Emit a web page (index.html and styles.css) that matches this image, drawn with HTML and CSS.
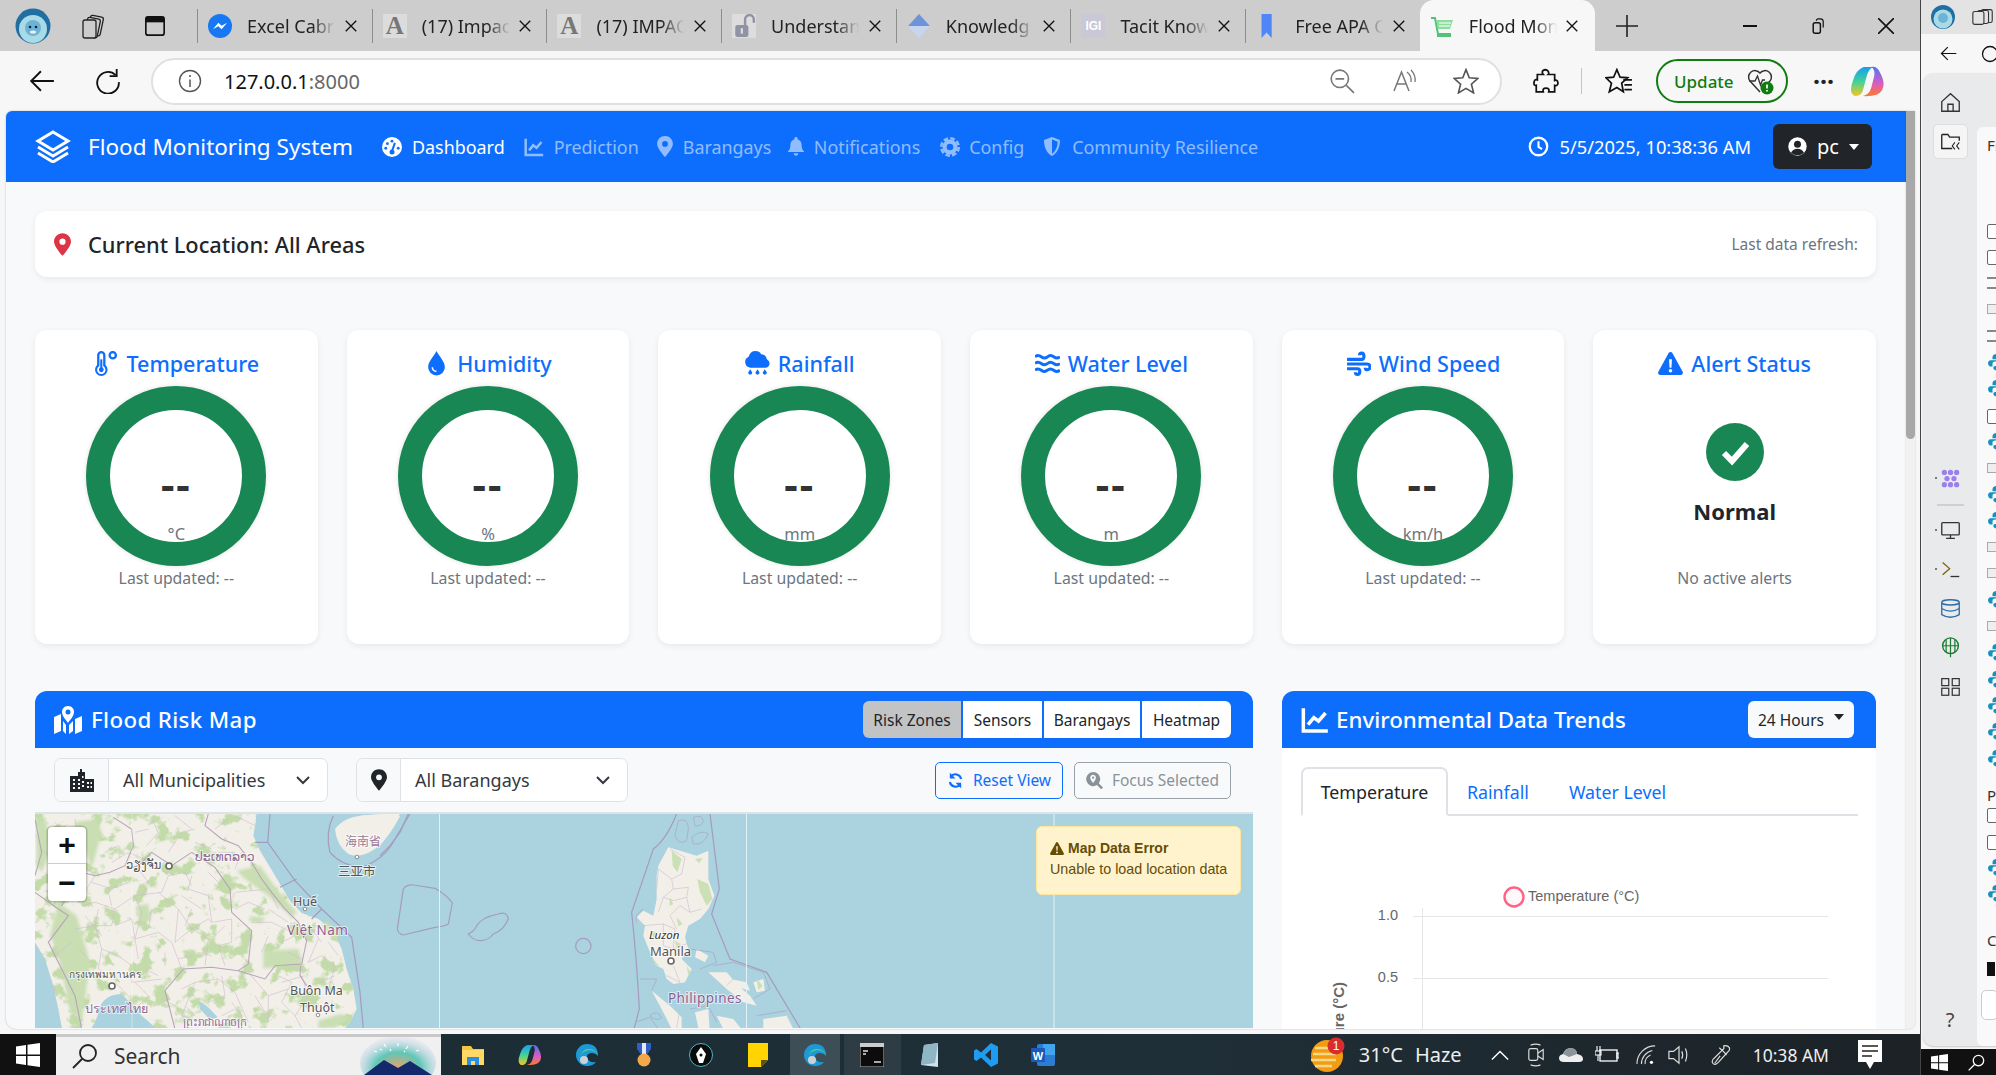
FILE: index.html
```html
<!DOCTYPE html>
<html lang="en">
<head>
<meta charset="utf-8">
<title>Flood Monitoring System</title>
<link rel="stylesheet" href="styles.css">
</head>
<body>
<svg class="defs" width="0" height="0" aria-hidden="true">
  <defs>
    <linearGradient id="cp1" x1="0" y1="0" x2="0" y2="1"><stop offset="0" stop-color="#1a9cf2"/><stop offset=".5" stop-color="#3fd29a"/><stop offset="1" stop-color="#f4c81e"/></linearGradient>
    <linearGradient id="cp2" x1="0" y1="0" x2="0" y2="1"><stop offset="0" stop-color="#4f76f0"/><stop offset=".55" stop-color="#d65cc4"/><stop offset="1" stop-color="#ff7a2c"/></linearGradient>
  </defs>
  <symbol id="i-x" viewBox="0 0 16 16"><path d="M2 2L14 14M14 2L2 14" stroke="currentColor" stroke-width="1.600" fill="none"/></symbol>
  <symbol id="i-pin" viewBox="0 0 18 24"><path fill-rule="evenodd" fill="currentColor" d="M9 0C4 0 0 4 0 9c0 4 5.500 11 9 15 3.500-4 9-11 9-15C18 4 14 0 9 0zM9 12.300A3.300 3.300 0 1 1 9 5.700a3.300 3.300 0 0 1 0 6.600z"/></symbol>
  <symbol id="i-chart" viewBox="0 0 24 24"><path d="M2 2V21.500H23" stroke="currentColor" stroke-width="3" fill="none"/><path d="M6 16L11 10L15 13L21 6" stroke="currentColor" stroke-width="3" fill="none"/></symbol>
  <symbol id="i-tri" viewBox="0 0 24 22"><path fill-rule="evenodd" fill="currentColor" d="M12 0c.8 0 1.400.4 1.800 1L23.700 19c.7 1.300-.2 3-1.800 3H2.100C.5 22-.4 20.300.3 19L10.200 1C10.600.4 11.200 0 12 0zM10.600 7l.5 8h1.800l.5-8zM12 16.300a1.700 1.700 0 1 0 0 3.400 1.700 1.700 0 0 0 0-3.400z"/></symbol>
  <symbol id="i-py" viewBox="0 0 20 20"><path fill="#1293c0" d="M10 1C6 1 5 3 5 5v2h6v1H3C1 8 0 10 0 11s1 4 3 4h2v-3c0-1.500 1-2.500 3-2.500h5c1.500 0 2-1 2-2V4c0-2-2-3-5-3zM15 9v3c0 2-1 2.500-3 2.500H8c-1.500 0-2 1-2 2V17c0 1.500 2 2.500 5 2.500s4-2 4-3V15h-5v-1h7c2 0 3-2 3-3.500S19 9 17 9z"/></symbol>
  <symbol id="i-copilot" viewBox="0 0 36 32"><path d="M3 15Q6 4 14 1H24Q19 3 17 11L13 26Q11 31 5 31Q-2 28 3 15Z" fill="url(#cp1)"/><path d="M22 1Q28 0 31 7Q37 18 33 25Q29 32 13 31Q20 30 22 22L25 10Q26 4 22 1Z" fill="url(#cp2)"/></symbol>
  <symbol id="i-edge" viewBox="0 0 24 24"><path d="M12 1A11 11 0 0 0 1 12A11 11 0 0 0 12 23Q18 23 21 19Q14 20 12 15Q11 11 16 10Q21 10 23 13Q23 1 12 1Z" fill="#1c9ad6"/><path d="M23 13Q21 7 14 7Q6 8 4 15Q7 6 14 6Q21 6 23 13Z" fill="#5fd38a"/><circle cx="9" cy="17" r="4" fill="#c9d1d9"/></symbol>
</svg>

<div class="screen">
  <div class="left-col">
    <div class="browser">
      <div class="tabstrip">
        <div class="strip-left">
          <svg class="profile" viewBox="0 0 36 36"><circle cx="18" cy="18" r="17.500" fill="#1f6fa3"/><circle cx="18" cy="21" r="14" fill="#a8dbe6"/><circle cx="18" cy="20" r="8" fill="#6db3d6"/><circle cx="15" cy="19" r="1.300" fill="#123"/><circle cx="21" cy="19" r="1.300" fill="#123"/><ellipse cx="18" cy="24" rx="3" ry="1.500" fill="#e8f4f8"/></svg>
          <svg class="strip-ic" viewBox="0 0 26 26"><rect x="9" y="3" width="13" height="19" rx="2" transform="rotate(12 15 12)" fill="#ccc" stroke="#222" stroke-width="1.300"/><rect x="6" y="5" width="13" height="19" rx="2" transform="rotate(12 12 14)" fill="#ccc" stroke="#222" stroke-width="1.300"/><rect x="3" y="7" width="13" height="18" rx="2" fill="#ccc" stroke="#222" stroke-width="1.300"/></svg>
          <svg class="strip-ic strip-ic-b" viewBox="0 0 24 24"><rect x="2" y="2" width="20" height="20" rx="2.500" fill="none" stroke="#111" stroke-width="1.800"/><rect x="2" y="2" width="20" height="6" fill="#111"/></svg>
        </div>
        <div class="tab">
          <svg class="fav" viewBox="0 0 22 22"><circle cx="11" cy="11" r="11" fill="#1877f2"/><path d="M4.500 14L9.500 8L12.500 10.800L17.500 8L12.500 14L9.500 11.200Z" fill="#fff"/></svg>
          <span class="tab-text">Excel Cabr</span><svg class="tab-x"><use href="#i-x"/></svg>
        </div>
        <div class="tab">
          <span class="fav fav-a">A</span>
          <span class="tab-text">(17) Impac</span><svg class="tab-x"><use href="#i-x"/></svg>
        </div>
        <div class="tab">
          <span class="fav fav-a">A</span>
          <span class="tab-text">(17) IMPAC</span><svg class="tab-x"><use href="#i-x"/></svg>
        </div>
        <div class="tab">
          <svg class="fav" viewBox="0 0 22 22"><rect width="22" height="22" fill="#ddd"/><rect x="3" y="10" width="12" height="11" rx="2" fill="#8f93a3"/><path d="M12 10V5a4 4 0 0 1 8 0v3" fill="none" stroke="#8f93a3" stroke-width="2.200"/><rect x="8" y="13" width="2" height="5" fill="#ddd"/></svg>
          <span class="tab-text">Understan</span><svg class="tab-x"><use href="#i-x"/></svg>
        </div>
        <div class="tab">
          <svg class="fav" viewBox="0 0 22 22"><path d="M11 0L21 11H1Z" fill="#6f93d8"/><path d="M1 11H21L11 22Z" fill="#c7d6ee"/></svg>
          <span class="tab-text">Knowledg</span><svg class="tab-x"><use href="#i-x"/></svg>
        </div>
        <div class="tab">
          <span class="fav fav-igi">IGI</span>
          <span class="tab-text">Tacit Know</span><svg class="tab-x"><use href="#i-x"/></svg>
        </div>
        <div class="tab">
          <svg class="fav" viewBox="0 0 22 26"><path d="M4 0H15V26L9.500 20L4 26Z" fill="#4f86f7"/></svg>
          <span class="tab-text">Free APA C</span><svg class="tab-x"><use href="#i-x"/></svg>
        </div>
        <div class="tab tab-active">
          <svg class="fav" viewBox="0 0 24 24"><path d="M1 4H5L8 20H21" fill="none" stroke="#52c27a" stroke-width="2"/><path d="M6 6H23L20 15H8Z" fill="#8fdc9f"/><path d="M9 9H21M9 12H20" stroke="#fff" stroke-width="1.200"/><rect x="7" y="20" width="14" height="3" fill="#52c27a"/></svg>
          <span class="tab-text">Flood Mon</span><svg class="tab-x"><use href="#i-x"/></svg>
        </div>
        <svg class="tab-plus" viewBox="0 0 22 22"><path d="M11 0V22M0 11H22" stroke="#222" stroke-width="1.600"/></svg>
        <div class="win-btns">
          <svg class="win-btn" viewBox="0 0 16 16"><path d="M1 8H15" stroke="#111" stroke-width="2"/></svg>
          <svg class="win-btn" viewBox="0 0 16 20"><rect x="2" y="6" width="9" height="13" rx="2.500" fill="none" stroke="#111" stroke-width="1.800"/><path d="M6 3.500C6 2 7 1 8.500 1H11C13 1 14.500 2.500 14.500 4.500V12" fill="none" stroke="#111" stroke-width="1.500"/></svg>
          <svg class="win-btn" viewBox="0 0 16 16"><path d="M0 0L16 16M16 0L0 16" stroke="#111" stroke-width="1.600"/></svg>
        </div>
      </div>

      <div class="toolbar">
        <svg class="tool-ic tool-back" viewBox="0 0 24 24"><path d="M23 12H2M11 3L2 12L11 21" fill="none" stroke="#111" stroke-width="1.700"/></svg>
        <svg class="tool-ic tool-reload" viewBox="0 0 24 24"><path d="M19 6.500A10 10 0 1 0 22 13" fill="none" stroke="#111" stroke-width="1.700"/><path d="M20 1V7.500H13.500" fill="none" stroke="#111" stroke-width="1.700"/></svg>
        <div class="addr">
          <svg class="addr-info" viewBox="0 0 24 24"><circle cx="12" cy="12" r="10.500" fill="none" stroke="#555" stroke-width="1.400"/><path d="M12 10.500V18" stroke="#555" stroke-width="1.500"/><circle cx="12" cy="7" r="1" fill="#555"/></svg>
          <span class="addr-url">127.0.0.1<span class="addr-port">:8000</span></span>
          <div class="addr-tools">
            <svg class="tool-ic" viewBox="0 0 24 24"><circle cx="10" cy="10" r="8" fill="none" stroke="#777" stroke-width="1.500"/><path d="M6 10H14M16 16L23 23" stroke="#777" stroke-width="1.500"/></svg>
            <svg class="tool-ic" viewBox="0 0 26 24"><path d="M2 22L9.500 3L17 22M5 15H14" fill="none" stroke="#777" stroke-width="1.500"/><path d="M15 3Q20 7 19 13M19 1Q24 6 23 13" fill="none" stroke="#777" stroke-width="1.300"/></svg>
            <svg class="tool-ic" viewBox="0 0 24 24"><path d="M12 1.500L15 9L23 9.600L17 15L19 23L12 18.800L5 23L7 15L1 9.600L9 9Z" fill="none" stroke="#555" stroke-width="1.500"/></svg>
          </div>
        </div>
        <svg class="tool-ic tool-ext" viewBox="0 0 24 24"><path d="M9 2.500Q12 .5 14 3Q15 5 14 6H20V11.500Q22.500 10.500 23 13.500Q23 17 20 16V22H14.500Q15.500 18.500 12 18.500Q8.500 18.500 9.500 22H3V16Q.5 16.500 1 13.500Q1 10 4 11V6H9.500Q8 4.500 9 2.500Z" fill="none" stroke="#111" stroke-width="1.600"/></svg>
        <span class="tool-sep"></span>
        <svg class="tool-ic tool-fav" viewBox="0 0 26 24"><path d="M11 1.500L14 8.500L21 9L15.500 14L17 22L11 18L4 22L6 14L1 9L8 8.500Z" fill="none" stroke="#111" stroke-width="1.600"/><path d="M17 11H25M18 15.500H25M18 20H25" stroke="#111" stroke-width="1.600"/></svg>
        <div class="update">
          <span>Update</span>
          <svg class="update-ic" viewBox="0 0 28 28"><path d="M13 25L3 14A6 6 0 0 1 13 6A6 6 0 0 1 23 14L20 17" fill="none" stroke="#333" stroke-width="1.500"/><path d="M2 14H8L10.500 9L13.500 18L15.500 13H18" fill="none" stroke="#333" stroke-width="1.300"/><circle cx="20" cy="21" r="6.500" fill="#107c10"/><path d="M20 17.500V21.500M20 23V24.500" stroke="#fff" stroke-width="1.700"/></svg>
        </div>
        <span class="tool-dots">···</span>
        <svg class="copilot"><use href="#i-copilot"/></svg>
      </div>

      <div class="viewport">
        <main class="page">
          <nav class="nav">
            <svg class="brand-ic" viewBox="0 0 36 33"><path d="M18 2L33 11L18 20L3 11Z" fill="none" stroke="#fff" stroke-width="3"/><path d="M3 17L18 26L33 17M3 23L18 32L33 23" fill="none" stroke="#fff" stroke-width="3"/></svg>
            <span class="brand">Flood Monitoring System</span>
            <a class="nav-link is-active n1"><svg class="nav-ic" viewBox="0 0 24 24"><circle cx="12" cy="12" r="12" fill="currentColor"/><path d="M12 17L15.500 7" stroke="#0d6efd" stroke-width="2.400"/><circle cx="12" cy="5" r="1.700" fill="#0d6efd"/><circle cx="6.500" cy="8" r="1.700" fill="#0d6efd"/><circle cx="4.500" cy="13.500" r="1.700" fill="#0d6efd"/><circle cx="19.500" cy="13.500" r="1.700" fill="#0d6efd"/><circle cx="12" cy="18" r="3" fill="#0d6efd"/></svg>Dashboard</a>
            <a class="nav-link n2"><svg class="nav-ic"><use href="#i-chart"/></svg>Prediction</a>
            <a class="nav-link n3"><svg class="nav-ic nav-ic-n"><use href="#i-pin"/></svg>Barangays</a>
            <a class="nav-link n4"><svg class="nav-ic nav-ic-n" viewBox="0 0 20 24"><path fill="currentColor" d="M10 0C8.800 0 8 .8 8 2V3C4.500 4 3 7 3 10C3 14 2 16 0 18V19H20V18C18 16 17 14 17 10C17 7 15.500 4 12 3V2C12 .8 11.200 0 10 0ZM7 20.500A3 3 0 0 0 13 20.500Z"/></svg>Notifications</a>
            <a class="nav-link n5"><svg class="nav-ic" viewBox="0 0 24 24"><circle cx="12" cy="12" r="6.500" fill="none" stroke="currentColor" stroke-width="5"/><circle cx="12" cy="12" r="10.500" fill="none" stroke="currentColor" stroke-width="3" stroke-dasharray="5.500 2.750"/></svg>Config</a>
            <a class="nav-link n6"><svg class="nav-ic nav-ic-n" viewBox="0 0 20 24"><path fill="currentColor" d="M10 0L20 4C20 14 16 21 10 24C4 21 0 14 0 4ZM10 3V21C14 18.500 17 13 17 6Z"/></svg>Community Resilience</a>
            <div class="nav-right">
              <svg class="clock-ic" viewBox="0 0 24 24"><circle cx="12" cy="12" r="10" fill="none" stroke="#fff" stroke-width="2.600"/><path d="M12 6V12.500L16 15" fill="none" stroke="#fff" stroke-width="2.400"/></svg>
              <span class="clock">5/5/2025, 10:38:36 AM</span>
              <div class="user-btn">
                <svg class="user-ic" viewBox="0 0 24 24"><circle cx="12" cy="12" r="10.500" fill="#fff"/><circle cx="12" cy="9.500" r="4" fill="#212529"/><path d="M4.500 19Q7 14.500 12 14.500Q17 14.500 19.500 19Q16.500 22 12 22Q7.500 22 4.500 19Z" fill="#212529"/></svg>
                <span>pc</span><span class="caret"></span>
              </div>
            </div>
          </nav>

          <div class="content">
            <section class="loc-card">
              <svg class="loc-pin"><use href="#i-pin"/></svg>
              <h2 class="loc-title">Current Location: All Areas</h2>
              <span class="loc-refresh">Last data refresh:</span>
            </section>

            <section class="stats">
              <article class="stat">
                <h3 class="stat-title"><svg class="stat-ic" viewBox="0 0 24 24"><path fill-rule="evenodd" fill="currentColor" d="M7 0a4 4 0 0 1 4 4v9.500a6 6 0 1 1-8 0V4a4 4 0 0 1 4-4zM7 2.200A1.800 1.800 0 0 0 5.200 4v10.500a4 4 0 1 0 3.600 0V4A1.800 1.800 0 0 0 7 2.200z"/><circle cx="7" cy="18" r="2.300" fill="currentColor"/><rect x="6" y="8" width="2" height="9" fill="currentColor"/><circle cx="18" cy="4" r="3" fill="none" stroke="currentColor" stroke-width="2.200"/></svg>Temperature</h3>
                <div class="gauge"><span class="gauge-val">--</span><span class="gauge-unit">°C</span></div>
                <p class="stat-note">Last updated: --</p>
              </article>
              <article class="stat">
                <h3 class="stat-title"><svg class="stat-ic" viewBox="0 0 24 24"><path fill="currentColor" d="M12 0C9 6 4 10 4 15.500A8 8 0 0 0 20 15.500C20 10 15 6 12 0Z"/><path d="M8 15.500A4 4 0 0 0 12 19.500" fill="none" stroke="#fff" stroke-width="1.500"/></svg>Humidity</h3>
                <div class="gauge"><span class="gauge-val">--</span><span class="gauge-unit">%</span></div>
                <p class="stat-note">Last updated: --</p>
              </article>
              <article class="stat">
                <h3 class="stat-title"><svg class="stat-ic" viewBox="0 0 24 24"><path fill="currentColor" d="M5 16A5.500 5.500 0 0 1 3.500 5.500Q5 0 10 0Q14 0 15.500 3Q20 3 21 8Q24 9.500 23.500 12.500Q23 16 19.500 16Z"/><path d="M5 17.500l-2 3.200a2 2 0 1 0 4 0zM12 17.500l-2 3.200a2 2 0 1 0 4 0zM19 17.500l-2 3.200a2 2 0 1 0 4 0z" fill="currentColor"/></svg>Rainfall</h3>
                <div class="gauge"><span class="gauge-val">--</span><span class="gauge-unit">mm</span></div>
                <p class="stat-note">Last updated: --</p>
              </article>
              <article class="stat">
                <h3 class="stat-title"><svg class="stat-ic" viewBox="0 0 26 24"><path d="M0 5Q3 2.500 6.500 5T13 5T19.500 5T26 5M0 12Q3 9.500 6.500 12T13 12T19.500 12T26 12M0 19Q3 16.500 6.500 19T13 19T19.500 19T26 19" fill="none" stroke="currentColor" stroke-width="3"/></svg>Water Level</h3>
                <div class="gauge"><span class="gauge-val">--</span><span class="gauge-unit">m</span></div>
                <p class="stat-note">Last updated: --</p>
              </article>
              <article class="stat">
                <h3 class="stat-title"><svg class="stat-ic" viewBox="0 0 24 24"><path d="M1 8H15C18 8 18 2 15 2Q13 2 13 4M1 12.500H20C24 12.500 24 18 20.500 18Q18.500 18 18.500 16M1 17H11C14 17 14 22.500 11 22.500Q9 22.500 9 20.500" fill="none" stroke="currentColor" stroke-width="3"/></svg>Wind Speed</h3>
                <div class="gauge"><span class="gauge-val">--</span><span class="gauge-unit">km/h</span></div>
                <p class="stat-note">Last updated: --</p>
              </article>
              <article class="stat">
                <h3 class="stat-title"><svg class="stat-ic"><use href="#i-tri"/></svg>Alert Status</h3>
                <div class="alert-body">
                  <svg class="alert-check" viewBox="0 0 58 58"><circle cx="29" cy="29" r="29" fill="#198754"/><path d="M18 30L26 38L41 21" fill="none" stroke="#fff" stroke-width="6"/></svg>
                  <strong class="alert-state">Normal</strong>
                </div>
                <p class="stat-note">No active alerts</p>
              </article>
            </section>

            <section class="panels">
              <article class="panel panel-map">
                <header class="panel-head">
                  <h3 class="panel-title"><svg class="panel-ic" viewBox="0 0 28 28"><path fill="#fff" d="M0 11L7 8V25L0 28ZM21 13L28 10V25L21 28ZM9 15L12 19V28L9 25ZM19 15V25L15 28V19Z"/><path fill="#fff" fill-rule="evenodd" d="M14 0C10 0 8 3 8 6C8 10 12 14 14 17C16 14 20 10 20 6C20 3 18 0 14 0ZM14 3.500A2.500 2.500 0 1 1 14 8.500A2.500 2.500 0 0 1 14 3.500Z"/></svg><span class="title-map">Flood Risk Map</span></h3>
                  <div class="btn-group">
                    <button class="seg is-on">Risk Zones</button><button class="seg">Sensors</button><button class="seg">Barangays</button><button class="seg">Heatmap</button>
                  </div>
                </header>
                <div class="map-tools">
                  <div class="select sel-a">
                    <span class="sel-ic"><svg class="sel-svg" viewBox="0 0 24 24"><path fill="#212529" d="M0 8H8V4H10V1H12V4H15V11H24V24H0Z"/><path d="M3 11H5V13H3ZM3 15H5V17H3ZM3 19H5V21H3ZM8 11H10V13H8ZM8 15H10V17H8ZM8 19H10V21H8ZM12 8H13.500V10H12ZM12 13H14V15H12ZM12 17H14V19H12ZM17 14H19V16H17ZM17 18H19V20H17ZM20.500 14H22V16H20.500ZM20.500 18H22V20H20.500Z" fill="#f8f9fa"/></svg></span>
                    <span class="sel-text">All Municipalities</span>
                    <svg class="chev" viewBox="0 0 16 16"><path d="M2 5L8 11L14 5" fill="none" stroke="#343a40" stroke-width="2"/></svg>
                  </div>
                  <div class="select sel-b">
                    <span class="sel-ic"><svg class="sel-pin"><use href="#i-pin"/></svg></span>
                    <span class="sel-text">All Barangays</span>
                    <svg class="chev" viewBox="0 0 16 16"><path d="M2 5L8 11L14 5" fill="none" stroke="#343a40" stroke-width="2"/></svg>
                  </div>
                  <div class="map-actions">
                    <button class="act act-blue"><svg class="act-ic" viewBox="0 0 24 24"><path d="M20 10A8.500 8.500 0 0 0 5 6.500M4 14A8.500 8.500 0 0 0 19 17.500" fill="none" stroke="currentColor" stroke-width="3"/><path d="M4 1V9H12ZM20 23V15H12Z" fill="currentColor"/></svg>Reset View</button>
                    <button class="act act-gray"><svg class="act-ic" viewBox="0 0 24 24"><path fill="currentColor" fill-rule="evenodd" d="M10 0a10 10 0 0 1 8 16l6 6-2.500 2.500-6-6A10 10 0 1 1 10 0zM10 4C7.500 4 6 6 6 8c0 3 3 6 4 7.500 1-1.500 4-4.500 4-7.500 0-2-1.500-4-4-4z"/><circle cx="10" cy="8" r="1.600" fill="currentColor"/></svg>Focus Selected</button>
                  </div>
                </div>
                <div class="map">
                  <svg class="map-svg" viewBox="0 0 1219 214" preserveAspectRatio="xMinYMin slice">
                    <defs>
                      <clipPath id="land-clip"><path d="M0 0H665L662 40L655 80L675 125L705 175L735 225L765 275L800 312L850 330L895 365L920 420L935 480L955 540L965 600L945 640L910 680H0Z"/></clipPath>
                      <filter id="mott" x="0" y="0" width="100%" height="100%" color-interpolation-filters="sRGB"><feTurbulence type="fractalNoise" baseFrequency=".02" numOctaves="4" seed="11"/><feColorMatrix values="0 0 0 0 .76  0 0 0 0 .86  0 0 0 0 .66  8 0 0 0 -4.300"/></filter>
                    </defs>
                    <rect width="1219" height="214" fill="#aad3df"/>
                    <g class="map-base" transform="translate(0,-5) scale(.33333)">
                      <path fill="#f2efe9" d="M0 0H665L662 40L655 80L675 125L705 175L735 225L765 275L800 312L850 330L895 365L920 420L935 480L955 540L965 600L945 640L910 680H0Z"/>
                      <g clip-path="url(#land-clip)"><rect width="960" height="680" filter="url(#mott)"/></g>
                      <path fill="#aad3df" d="M190 600Q210 555 260 555Q285 580 320 620Q345 640 385 680H150Q190 640 190 600ZM0 400L30 450L55 530L70 600L85 680H0ZM490 575Q510 585 525 600L548 625L525 632L495 600Z"/>
                      <path fill="#f2efe9" d="M900 60Q930 20 1000 18Q1070 10 1095 22Q1060 90 1020 120Q975 150 940 135Q905 110 900 60Z"/>
                      <g class="m-green">
                        <path d="M5 30L35 40L45 130L20 190L5 170ZM120 40L185 30L200 70L170 180L145 110L125 100ZM70 280L125 320L165 460L140 640L105 600L65 420L45 380Z"/>
                        <path d="M305 290L340 285L348 335L312 335ZM605 185L675 170L725 240L785 310L770 325L700 260L630 210ZM645 322L690 326L680 342L645 338ZM685 425L790 420L803 465L730 475L685 478ZM870 335L915 370L900 395L862 352ZM850 635L915 615L945 625L900 657L850 657Z"/>
                      </g>
                      <g class="m-prov">
                        <path d="M20 120L60 160L120 150L180 200L130 280M180 280L240 300L230 350L180 350L190 300M240 300L300 260L380 250L400 200L370 170M300 260L320 310L300 390L370 370L410 400L440 480M370 250L430 300L420 400L470 360L520 390L510 470M470 200L460 240L520 260L530 340L590 330L590 400L550 410L570 470M430 300L470 360L520 330L530 340M120 360L180 350L200 420L250 440L290 470L290 520L380 510M200 420L190 480L230 510M300 390L310 450M390 430L390 470M600 250L700 240L730 300M650 340L710 340L770 370M700 380L680 430M850 390L820 460L860 440L900 470L880 540L920 560M800 500L820 560L780 620L800 657M480 520L550 510L600 550L640 640M560 500L570 560L520 580M440 540L480 520L440 620L500 640M640 490L700 560L760 540M700 560L700 640M20 480L60 540L40 610M110 400L60 440"/>
                        <path d="M600 20L660 50M540 60L580 30M120 30L130 100M230 160L280 130L350 160M480 60L440 70L400 130M345 20L370 70L335 110M420 20L470 60M60 40L100 90L60 130M170 220L230 240L280 220M310 180L340 220L320 260M400 200L450 190L470 230M520 190L560 230M600 300L640 280L690 300M740 400L780 380M860 520L900 500M730 500L770 520L740 580L780 620M560 620L600 600M300 520L340 560L300 600M380 570L420 590M230 290L220 250M140 290L180 280"/>
                        <path d="M150 320L200 380M240 350L290 330L300 390M130 420L170 460M350 300L340 360M440 260L500 300M470 300L450 350M540 380L570 350M490 430L530 440M430 450L470 440M620 130L600 180M680 120L720 150M550 130L600 130M300 70L340 60M210 130L250 110M90 200L130 220M60 210L40 260M480 100L530 120M700 300L760 340M830 360L860 400M880 400L910 440M760 430L800 450M740 520L810 500M660 560L690 610M590 580L620 620M450 590L480 620M240 520L280 560M330 480L370 500"/>
                      </g>
                      <g class="m-country">
                        <path d="M520 14L510 50L560 90L610 110L650 160L680 210L710 250L750 300L790 340L815 395L800 465L720 470L690 510L610 485L530 475L445 480L390 545L420 660"/>
                        <path d="M470 130L540 175L585 240L590 310L650 365L640 465L610 485"/>
                        <path d="M0 250L70 300L100 320L40 400L80 480L120 560L140 660"/>
                        <path d="M235 25L290 60L295 110L270 170L225 190L180 200L140 190L110 240L80 290M470 130L410 170L350 130L310 170L275 180"/>
                        <path d="M0 30L20 130L0 200"/>
                        <path d="M797 470L795 500L815 530"/>
                      </g>
                      <g class="m-sea">
                        <path d="M705 15L698 100L780 215L860 300L950 385L975 550L985 660M660 100H698M735 235L785 210M830 330L860 300"/>
                        <path d="M895 20Q870 70 885 130Q920 170 980 175Q1050 150 1080 90L1125 14"/>
                      </g>
                    </g>
                    <g class="map-base" transform="translate(345,-5) scale(.33333)">
                      <g fill="#f2efe9">
                        <path d="M835 170L865 115L950 140L985 125L985 210L1003 260L985 300L960 330L925 350L915 385L925 420L905 450L935 480L915 520L880 525L860 510L850 480L830 470L810 430L790 380L795 350L770 325L790 305L820 320L830 270L830 200Z"/>
                        <path d="M815 545L870 590L905 625L905 680H885L850 610ZM950 420L985 440L975 460L945 445ZM985 490L1040 490L1075 530L1110 560L1130 590L1090 580L1040 540ZM1120 520L1150 510L1155 545L1130 550ZM945 610L985 600L990 680H960ZM1150 630L1220 620L1250 680H1150ZM1010 620L1060 630L1100 680H1040ZM1050 510L1100 520L1110 545L1060 530Z"/>
                        <path d="M0 14H60L30 70L0 110Z"/>
                      </g>
                      <g fill="#cbe0b4">
                        <path d="M952 210L985 225L997 270L980 290L960 250ZM875 125L905 150L892 190L878 170ZM870 265L880 285L868 290ZM890 325L908 345L895 352ZM810 365L830 370L822 390ZM885 395L902 405L895 435ZM920 470L932 490L925 498ZM1130 510L1148 530L1135 543ZM820 450L838 472L825 468ZM945 150L968 147L958 163Z"/>
                      </g>
                      <g class="m-prov">
                        <path d="M870 120L915 145L905 195L875 210L835 180M875 210L880 240L925 235L920 265L880 275L850 265L835 310M880 240L850 265M920 265L930 310L900 290L870 320L890 360M930 310L965 300M835 180L830 240M790 350L850 345L885 360L880 420L930 400M850 345L850 410L880 420M880 470L900 520L860 500M985 495L1000 520M1040 530L1060 510M900 600L890 657"/>
                      </g>
                      <g class="m-sea">
                        <path d="M890 14Q860 90 820 120L755 310Q770 450 778 600L762 660M990 14L1018 240L995 315L1050 450L1160 490L1262 660"/>
                        <path d="M100 228L165 238Q200 258 217 282L205 345Q195 352 165 355L70 378Q55 375 52 360L70 240Q80 225 100 228Z"/>
                        <path d="M265 375Q285 365 290 350Q305 325 355 315Q380 305 385 330Q370 365 340 375Q325 395 300 395Q280 395 265 375Z"/>
                        <circle cx="610" cy="411" r="23"/>
                        <path d="M85 14L60 70L30 110L0 140"/>
                      </g>
                      <g class="m-isl">
                        <path d="M895 35Q925 25 925 60L920 95Q895 110 885 80ZM940 25Q965 15 970 35Q965 55 945 50ZM935 85Q965 60 985 75Q970 110 940 105ZM790 300Q760 320 770 340M930 420L1000 430L1010 460L960 480M780 510L830 510L815 545M1000 470L1060 460L1150 490L1170 540L1120 570M810 620Q830 600 845 625Q830 640 810 620ZM765 640L810 625L835 660M930 600L985 590L1010 640M1130 620L1220 605"/>
                      </g>
                    </g>
                    <path class="seam" d="M404.500 0V214M711.500 0V214M1019 0V214"/>
                    <path class="seam-faint" d="M97 0V214"/>
                    <text class="ml ml-cjk" x="310" y="32">海南省</text>
                    <circle class="ml-dot" cx="322" cy="43" r="1.800"/>
                    <text class="ml ml-cjk ml-city" x="303" y="62">三亚市</text>
                    <text class="ml ml-lao" x="160" y="47">ປະເທດລາວ</text>
                    <text class="ml ml-lao2" x="91" y="55">ວຽງຈັນ</text>
                    <circle class="ml-cap" cx="134" cy="52" r="3"/>
                    <text class="ml ml-city" x="258" y="92">Huế</text>
                    <circle class="ml-dot" cx="270" cy="95" r="1.800"/>
                    <text class="ml ml-country" x="252" y="121">Việt Nam</text>
                    <text class="ml ml-thai" x="34" y="164">กรุงเทพมหานคร</text>
                    <circle class="ml-cap" cx="77" cy="172" r="3"/>
                    <text class="ml ml-thai2" x="50" y="199">ประเทศไทย</text>
                    <text class="ml ml-city" x="255" y="181">Buôn Ma</text>
                    <text class="ml ml-city" x="265" y="198">Thuột</text>
                    <circle class="ml-dot" cx="283" cy="201" r="1.800"/>
                    <text class="ml ml-khm" x="148" y="212">ព្រះរាជាណាចក្រ</text>
                    <text class="ml ml-luzon" x="614" y="125">Luzon</text>
                    <text class="ml ml-manila" x="615" y="142">Manila</text>
                    <circle class="ml-cap" cx="636" cy="147" r="3"/>
                    <text class="ml ml-phil" x="633" y="189">Philippines</text>
                  </svg>
                  <div class="zoom-ctl"><span class="zoom-btn">+</span><span class="zoom-btn zoom-minus">−</span></div>
                  <div class="map-alert">
                    <div class="map-alert-h"><svg class="map-alert-ic"><use href="#i-tri"/></svg>Map Data Error</div>
                    <div class="map-alert-b">Unable to load location data</div>
                  </div>
                </div>
              </article>
              <article class="panel panel-chart">
                <header class="panel-head">
                  <h3 class="panel-title"><svg class="panel-ic"><use href="#i-chart"/></svg>Environmental Data Trends</h3>
                  <button class="range">24 Hours<span class="caret caret-dark"></span></button>
                </header>
                <div class="chart-body">
                  <div class="tabs">
                    <span class="ctab is-on">Temperature</span><span class="ctab">Rainfall</span><span class="ctab">Water Level</span>
                  </div>
                  <svg class="chart" viewBox="0 0 557 300">
                    <circle cx="213" cy="81" r="9.500" fill="#fde8ed" fill-opacity=".3" stroke="#ff6384" stroke-width="2.400"/>
                    <text class="c-legend" x="227" y="85">Temperature (°C)</text>
                    <path class="c-grid" d="M112 100.500H527M112 162.500H527M121.500 92V300"/>
                    <text class="c-tick" x="97" y="104">1.0</text>
                    <text class="c-tick" x="97" y="166">0.5</text>
                    <text class="c-title" transform="translate(43,166) rotate(-90)">Temperature (°C)</text>
                  </svg>
                </div>
              </article>
            </section>
          </div>
        </main>
        <div class="scrollbar"><div class="scroll-thumb"></div></div>
      </div>
    </div>

    <footer class="taskbar">
      <div class="tb-start"><svg class="tb-win" viewBox="0 0 24 24"><path fill="#fff" d="M0 3.500L10 2V11.500H0ZM11.500 1.800L24 0V11.500H11.500ZM0 13H10V22L0 20.500ZM11.500 13H24V24L11.500 22.200Z"/></svg></div>
      <div class="tb-search">
        <svg class="tb-search-ic" viewBox="0 0 26 26"><circle cx="16" cy="10" r="8" fill="none" stroke="#222" stroke-width="1.800"/><path d="M10 16L1 25" stroke="#222" stroke-width="1.800"/></svg>
        <span class="tb-search-text">Search</span>
        <svg class="tb-deco" viewBox="0 0 76 38"><defs><radialGradient id="dg" cx=".5" cy=".6" r=".6"><stop offset="0" stop-color="#f2a06a"/><stop offset=".5" stop-color="#5fc7b8"/><stop offset="1" stop-color="#dcd6f4" stop-opacity=".2"/></radialGradient></defs><ellipse cx="38" cy="26" rx="38" ry="27" fill="url(#dg)"/><path d="M4 38L24 23L38 31L50 24L72 38Z" fill="#13296b"/><path d="M14 14l3 1M24 7l2 3M38 6l0 3M48 9l-2 3M56 14l3-1M20 12l2 1M30 12l1 2M44 14l1 1" stroke="#fff" stroke-width="1.200"/></svg>
      </div>
      <div class="tb-apps">
        <span class="tb-slot"><svg class="tb-ic" viewBox="0 0 24 24"><path d="M1 3H10L12 6H23V22H1Z" fill="#f4c542"/><path d="M1 7H23V22H1Z" fill="#ffd866"/><rect x="6" y="14" width="12" height="8" fill="#2a8fe0"/><rect x="10" y="18" width="4" height="4" fill="#ffd866"/></svg></span>
        <span class="tb-slot"><svg class="tb-ic"><use href="#i-copilot"/></svg></span>
        <span class="tb-slot"><svg class="tb-ic"><use href="#i-edge"/></svg></span>
        <span class="tb-slot"><svg class="tb-ic" viewBox="0 0 24 24"><path d="M5 0H19V6L14 13H10L5 6Z" fill="#2f5fc4"/><path d="M10 0H14V12H10Z" fill="#e8e8f5"/><circle cx="12" cy="17" r="6.500" fill="#f5a84a"/></svg></span>
        <span class="tb-slot"><svg class="tb-ic" viewBox="0 0 24 24"><circle cx="12" cy="12" r="11.500" fill="#0b0b0b" stroke="#4fb6c9" stroke-width="1"/><path d="M12 4L17 11L14 20H10L7 11Z" fill="#fff"/><circle cx="12" cy="12" r="1.500" fill="#0b0b0b"/></svg></span>
        <span class="tb-slot"><svg class="tb-ic" viewBox="0 0 24 24"><path d="M2 0H22V17L15 24H2Z" fill="#ffd400"/><path d="M15 24V17H22Z" fill="#5f5304"/></svg></span>
        <span class="tb-slot tb-hl"><svg class="tb-ic"><use href="#i-edge"/></svg></span>
        <span class="tb-slot tb-hl2"><svg class="tb-ic" viewBox="0 0 24 24"><rect width="24" height="24" fill="#0c0c0c" stroke="#bbb"/><rect width="24" height="4" fill="#ccc"/><path d="M3 8H8M3 11H6M14 19H21" stroke="#ddd" stroke-width="1.500"/></svg></span>
        <span class="tb-slot"><svg class="tb-ic" viewBox="0 0 24 24"><path d="M7 2L21 0V24L4 22Z" fill="#cfe3ea"/><path d="M7 2L21 0L18 20L4 22Z" fill="#8fb6c4"/></svg></span>
        <span class="tb-slot"><svg class="tb-ic" viewBox="0 0 24 24"><path d="M17 0L24 3.500V20.500L17 24L7 14.500L2.500 18L0 16.500V7.500L2.500 6L7 9.500ZM17 6.500L11 12L17 17.500Z" fill="#1f9cf0"/></svg></span>
        <span class="tb-slot"><svg class="tb-ic" viewBox="0 0 24 24"><rect x="6" y="1" width="18" height="22" rx="2" fill="#2b7cd3"/><rect x="12" y="1" width="12" height="11" fill="#41a5ee"/><rect x="0" y="5" width="14" height="14" rx="1" fill="#185abd"/><text class="tb-w" x="7" y="16.500">W</text></svg></span>
      </div>
      <div class="tray">
        <span class="weather">
          <svg class="weather-ic" viewBox="0 0 36 36"><circle cx="17" cy="19" r="16" fill="#f39c12"/><path d="M5 11H24M3 17H26M1 23H26M5 29H22" stroke="#f5d98a" stroke-width="2.400"/><circle cx="26" cy="9" r="8.500" fill="#d92c2c"/><text class="weather-n" x="26" y="13">1</text></svg>
          <span class="tray-temp">31°C</span><span>Haze</span>
        </span>
        <svg class="tray-ic tray-chev" viewBox="0 0 20 12"><path d="M1 11L10 2L19 11" fill="none" stroke="#fff" stroke-width="1.600"/></svg>
        <svg class="tray-ic tray-meet" viewBox="0 0 20 26"><rect x="2" y="6" width="10" height="13" rx="2" fill="none" stroke="#ddd" stroke-width="1.300"/><path d="M12 11L18 7V18L12 14" fill="none" stroke="#ddd" stroke-width="1.300"/><path d="M4 2Q10 0 15 2M4 24Q10 26 15 24" fill="none" stroke="#ddd" stroke-width="1.300"/></svg>
        <svg class="tray-ic tray-cloud" viewBox="0 0 24 16"><path d="M5 15Q0 15 0 11Q0 8 4 7Q6 1 12 1Q18 2 18 7Q24 8 24 12Q24 15 20 15Z" fill="#eee"/><path d="M4 7Q6 1 12 1Q18 2 18 7L10 10Z" fill="#8b9499"/></svg>
        <svg class="tray-ic tray-batt" viewBox="0 0 24 20"><rect x="5" y="5" width="17" height="11" fill="none" stroke="#fff" stroke-width="1.300"/><path d="M22 8H24V13H22ZM0 6H6V10H0ZM2 1V6M5 1V6M3 10V16" stroke="#fff" stroke-width="1.100" fill="none"/></svg>
        <svg class="tray-ic tray-wifi" viewBox="0 0 22 22"><path d="M1 21A20 20 0 0 1 21 1M6 21A15 15 0 0 1 18 6M10 21A10 10 0 0 1 16 11" fill="none" stroke="#ddd" stroke-width="1.200"/><circle cx="17" cy="19" r="1.800" fill="#fff"/></svg>
        <svg class="tray-ic tray-vol" viewBox="0 0 24 22"><path d="M1 7H6L12 2V20L6 15H1Z" fill="none" stroke="#ddd" stroke-width="1.300"/><path d="M15 7Q17 11 15 15M19 4Q22 11 19 18" fill="none" stroke="#ddd" stroke-width="1.300"/></svg>
        <svg class="tray-ic tray-pen" viewBox="0 0 24 24"><path d="M14 2Q18 1 20 4Q21 7 18 9L8 20Q4 24 2 21Q0 18 4 15L14 5ZM9 4Q14 8 17 12M4 21L10 13" fill="none" stroke="#ddd" stroke-width="1.300"/></svg>
        <span class="tray-time">10:38 AM</span>
        <svg class="tray-note" viewBox="0 0 24 30"><path d="M0 0H24V22H16L12 29L8 22H0Z" fill="#fff"/><path d="M4 6H20M4 11H20M4 16H14" stroke="#222" stroke-width="1.500"/></svg>
      </div>
    </footer>
  </div>

  <aside class="side-col">
    <div class="side-win">
      <div class="side-tabs">
        <svg class="side-prof" viewBox="0 0 24 24"><circle cx="12" cy="12" r="12" fill="#1f6fa3"/><circle cx="12" cy="14" r="9.500" fill="#a8dbe6"/><circle cx="12" cy="13" r="5" fill="#6db3d6"/></svg>
        <svg class="side-ws" viewBox="0 0 26 20"><rect x="11" y="2" width="12" height="14" rx="2" fill="none" stroke="#333" stroke-width="1.200"/><rect x="7" y="3" width="12" height="14" rx="2" fill="#e3e3e3" stroke="#333" stroke-width="1.200"/><rect x="2" y="4" width="12" height="14" rx="2" fill="#e3e3e3" stroke="#333" stroke-width="1.200"/></svg>
      </div>
      <div class="side-tool">
        <svg class="side-back" viewBox="0 0 24 24"><path d="M23 12H2M11 3L2 12L11 21" fill="none" stroke="#111" stroke-width="1.700"/></svg>
        <svg class="side-reload" viewBox="0 0 24 24"><circle cx="12" cy="12" r="10" fill="none" stroke="#111" stroke-width="1.700"/></svg>
      </div>
      <div class="side-panel">
        <div class="rail">
          <svg class="rail-ic rail-home" viewBox="0 0 24 24"><path d="M2 11L12 2L22 11V22H2ZM9 22V14H15V22" fill="none" stroke="#333" stroke-width="1.500"/></svg>
          <span class="rail-folder"><svg class="rail-ic" viewBox="0 0 24 24"><path d="M2 4H9L11 7H22V11M14 20H2V4" fill="none" stroke="#222" stroke-width="1.500"/><path d="M17 13L14 17L17 21M22 13L19 17L22 21" fill="none" stroke="#222" stroke-width="1.200"/></svg></span>
          <span class="rail-grow"></span>
          <span class="rail-dot"></span>
          <svg class="rail-ic" viewBox="0 0 24 24"><g fill="#9a7ff0"><circle cx="5" cy="5" r="3"/><circle cx="12" cy="5" r="3"/><circle cx="19" cy="5" r="3"/><circle cx="8" cy="12" r="3"/><circle cx="16" cy="12" r="3"/><circle cx="5" cy="19" r="3"/><circle cx="12" cy="19" r="3"/><circle cx="19" cy="19" r="3"/></g></svg>
          <span class="rail-div"></span>
          <span class="rail-dot"></span>
          <svg class="rail-ic" viewBox="0 0 24 24"><rect x="2" y="3" width="20" height="14" rx="1" fill="none" stroke="#333" stroke-width="1.500"/><path d="M12 17V21M7 21H17" stroke="#333" stroke-width="1.500"/></svg>
          <span class="rail-dot"></span>
          <svg class="rail-ic" viewBox="0 0 24 24"><path d="M3 4L11 11L3 18" fill="none" stroke="#7d6200" stroke-width="1.500"/><path d="M12 20H22" stroke="#333" stroke-width="1.500"/></svg>
          <svg class="rail-ic" viewBox="0 0 24 24"><ellipse cx="12" cy="5" rx="10" ry="3" fill="none" stroke="#2d6ca8" stroke-width="1.500"/><path d="M2 5V19Q12 25 22 19V5M2 12Q12 18 22 12" fill="none" stroke="#2d6ca8" stroke-width="1.500"/></svg>
          <svg class="rail-ic" viewBox="0 0 24 24"><circle cx="12" cy="10" r="9" fill="none" stroke="#1e7a35" stroke-width="1.600"/><path d="M3 10H21M12 1V23M7 3V17M17 3V17" stroke="#1e7a35" stroke-width="1.400"/></svg>
          <svg class="rail-ic" viewBox="0 0 24 24"><rect x="2" y="3" width="8" height="8" fill="none" stroke="#333" stroke-width="1.400"/><rect x="14" y="3" width="8" height="8" fill="none" stroke="#333" stroke-width="1.400"/><rect x="2" y="14" width="8" height="8" fill="none" stroke="#333" stroke-width="1.400"/><rect x="14" y="14" width="8" height="8" fill="none" stroke="#333" stroke-width="1.400"/></svg>
          <span class="rail-help">?</span>
        </div>
        <div class="files">
          <div class="fl-h">Fi</div>
          <div class="fl-sp"></div>
          <div class="fl fl-dir"></div><div class="fl fl-dir"></div><div class="fl fl-lines"></div><div class="fl fl-m"></div><div class="fl fl-lines"></div>
          <svg class="fl fl-py"><use href="#i-py"/></svg><svg class="fl fl-py"><use href="#i-py"/></svg><div class="fl fl-dir"></div>
          <svg class="fl fl-py"><use href="#i-py"/></svg><div class="fl fl-m"></div><svg class="fl fl-py"><use href="#i-py"/></svg><svg class="fl fl-py"><use href="#i-py"/></svg><div class="fl fl-m"></div><div class="fl fl-m"></div>
          <svg class="fl fl-py"><use href="#i-py"/></svg><div class="fl fl-m"></div><svg class="fl fl-py"><use href="#i-py"/></svg><svg class="fl fl-py"><use href="#i-py"/></svg><svg class="fl fl-py"><use href="#i-py"/></svg><svg class="fl fl-py"><use href="#i-py"/></svg><svg class="fl fl-py"><use href="#i-py"/></svg>
          <div class="fl-h fl-h2">Pa</div>
          <div class="fl fl-dir"></div><div class="fl fl-dir"></div><svg class="fl fl-py"><use href="#i-py"/></svg><svg class="fl fl-py"><use href="#i-py"/></svg>
          <div class="fl-h fl-h3">Co</div>
          <div class="fl-black"></div>
          <div class="fl-input"></div>
        </div>
      </div>
    </div>
    <div class="side-taskbar">
      <svg class="st-win" viewBox="0 0 24 24"><path fill="#fff" d="M0 3.500L10 2V11.500H0ZM11.500 1.800L24 0V11.500H11.500ZM0 13H10V22L0 20.500ZM11.500 13H24V24L11.500 22.200Z"/></svg>
      <svg class="st-search" viewBox="0 0 26 26"><circle cx="16" cy="10" r="8" fill="none" stroke="#fff" stroke-width="2"/><path d="M10 16L1 25" stroke="#fff" stroke-width="2"/></svg>
    </div>
  </aside>
</div>
</body>
</html>
```

FILE: styles.css
```css
* { box-sizing: border-box; }
html, body { margin: 0; padding: 0; width: 1996px; height: 1075px; overflow: hidden; background: #f7f7f7; font-family: "Noto Sans", "Noto Sans CJK SC", sans-serif; color: #212529; }
h2, h3, p { margin: 0; }
button { font-family: inherit; cursor: pointer; }
.defs { position: absolute; }
.screen { display: flex; width: 1996px; height: 1075px; }
.left-col { width: 1920px; display: flex; flex-direction: column; }
.browser { height: 1034px; display: flex; flex-direction: column; background: #f7f7f7; }

/* tab strip */
.tabstrip { height: 51px; background: #cdcdcd; display: flex; align-items: center; flex: none; }
.strip-left { width: 197px; height: 100%; display: flex; align-items: center; padding-left: 15px; flex: none; }
.profile { width: 36px; height: 36px; }
.strip-ic { width: 26px; height: 26px; margin-left: 29px; }
.strip-ic-b { width: 22px; height: 22px; margin-left: 38px; }
.tab { width: 174.700px; height: 34px; flex: none; display: flex; align-items: center; padding-left: 10px; border-left: 1px solid #8d8d8d; font-size: 18px; color: #222; }
.fav { width: 24px; height: 24px; flex: none; }
.fav-a { background: #dcdcdc; color: #777; font-family: "Liberation Serif", serif; font-weight: 700; font-size: 25px; line-height: 24px; text-align: center; }
.fav-igi { background: #c8c8d6; color: #fff; font-family: "Liberation Sans", sans-serif; font-weight: 700; font-size: 12px; line-height: 24px; text-align: center; }
.tab-text { margin-left: 15px; width: 90px; white-space: nowrap; overflow: hidden; -webkit-mask-image: linear-gradient(90deg, #000 72%, transparent 98%); mask-image: linear-gradient(90deg, #000 72%, transparent 98%); }
.tab-x { width: 14px; height: 14px; margin-left: 6.500px; flex: none; color: #111; }
.tab-active { height: 51px; background: #f7f7f7; border-left: 0; border-radius: 14px 14px 0 0; align-self: flex-end; }
.tab-plus { width: 22px; height: 22px; margin-left: 21px; flex: none; }
.win-btns { margin-left: auto; display: flex; align-items: center; gap: 52px; padding-right: 26px; }
.win-btn { width: 16px; height: 16px; }

/* toolbar */
.toolbar { height: 60px; display: flex; align-items: center; flex: none; padding-left: 29px; position: relative; }
.tool-ic { width: 26px; height: 26px; flex: none; }
.tool-reload { margin-left: 40px; }
.addr { width: 1351px; height: 47px; margin-left: 30px; border-radius: 24px; background: #fff; border: 2px solid #e0e0e0; display: flex; align-items: center; padding-left: 25px; flex: none; }
.addr-info { width: 24px; height: 24px; }
.addr-url { margin-left: 22px; font-size: 20px; color: #111; }
.addr-port { color: #666; }
.addr-tools { margin-left: auto; display: flex; gap: 35px; padding-right: 21px; }
.addr-tools .tool-ic:first-child { margin-right: 2px; }
.tool-ext { margin-left: 31px; }
.tool-sep { width: 1px; height: 26px; background: #c5c5c5; margin-left: 22px; flex: none; }
.tool-fav { margin-left: 23px; width: 28px; }
.update { width: 132px; height: 44px; margin-left: 23px; border: 2px solid #107c10; border-radius: 22px; display: flex; align-items: center; justify-content: space-between; padding: 0 11px 0 16px; font-size: 17px; font-weight: 500; color: #107c10; flex: none; }
.update-ic { width: 28px; height: 28px; }
.tool-dots { margin-left: 25px; font-size: 25px; font-weight: 700; line-height: 1; color: #222; flex: none; width: 26px; }
.copilot { width: 35px; height: 31px; margin-left: 11px; flex: none; }

/* viewport */
.viewport { flex: 1; display: flex; padding: 0 5px 5px 6px; min-height: 0; }
.page { width: 1900px; height: 918px; overflow: hidden; background: #f8f9fa; border-radius: 6px 0 0 10px; box-shadow: 0 0 2px rgba(0,0,0,.25); flex: none; }
.scrollbar { width: 9px; height: 918px; background: #f1f1f1; border-radius: 0 0 6px 0; box-shadow: 0 0 2px rgba(0,0,0,.2); flex: none; }
.scroll-thumb { height: 328px; background: #a8a8a8; border-radius: 0 0 5px 5px; }

/* navbar */
.nav { height: 71px; background: #0d6efd; display: flex; align-items: center; padding-left: 29px; color: #fff; }
.brand-ic { width: 36px; height: 33px; flex: none; }
.brand { margin-left: 17px; font-size: 22.500px; white-space: nowrap; }
.nav-link { display: flex; align-items: center; font-size: 17.900px; color: rgba(255,255,255,.55); white-space: nowrap; }
.nav-link.is-active { color: #fff; }
.nav-ic { width: 20px; height: 20px; margin-right: 10px; flex: none; }
.nav-ic-n { width: 16px; height: 21px; margin-right: 10px; }
.n1 { margin-left: 29px; }
.n2 { margin-left: 19px; }
.n3 { margin-left: 18px; }
.n4 { margin-left: 16.500px; }
.n5 { margin-left: 20px; }
.n5 .nav-ic { margin-right: 9px; }
.n6 { margin-left: 20px; }
.n6 .nav-ic-n { margin-right: 12px; }
.nav-right { margin-left: auto; display: flex; align-items: center; padding-right: 34px; }
.clock-ic { width: 21px; height: 21px; }
.clock { margin-left: 10px; font-size: 18.300px; white-space: nowrap; }
.user-btn { width: 99px; height: 45px; margin-left: 22px; background: #212529; border-radius: 6px; display: flex; align-items: center; padding-left: 14px; font-size: 20px; }
.user-ic { width: 21px; height: 21px; margin-right: 9px; }
.caret { width: 0; height: 0; margin-left: 10px; border-left: 5px solid transparent; border-right: 5px solid transparent; border-top: 6px solid #fff; }
.caret-dark { border-top-color: #212529; margin-top: -5px; }

/* content */
.content { padding: 29px 30px 0 29px; display: flex; flex-direction: column; }
.loc-card { height: 66px; background: #fff; border-radius: 12px; box-shadow: 0 2px 6px rgba(0,0,0,.07); display: flex; align-items: center; padding: 0 18px 0 19px; }
.loc-pin { width: 17px; height: 23px; color: #dc3545; }
.loc-title { margin-left: 17px; font-size: 21.800px; font-weight: 500; }
.loc-refresh { margin-left: auto; font-size: 15.500px; color: #6c757d; }

.stats { margin-top: 53px; display: grid; grid-template-columns: repeat(6, 1fr); gap: 29px; }
.stat { height: 314px; background: #fff; border-radius: 12px; box-shadow: 0 2px 6px rgba(0,0,0,.07); display: flex; flex-direction: column; align-items: center; padding-top: 18px; }
.stat-title { height: 30px; display: flex; align-items: center; font-size: 21.500px; font-weight: 500; color: #0d6efd; white-space: nowrap; }
.stat-ic { width: 25px; height: 25px; margin-right: 8px; flex: none; }
.gauge { width: 180px; height: 180px; margin-top: 8px; border-radius: 50%; border: 24px solid #198754; box-shadow: 0 0 5px rgba(0,0,0,.12); display: flex; flex-direction: column; align-items: center; }
.gauge-val { height: 40px; margin-top: 54px; font-size: 42px; line-height: 40px; font-weight: 700; letter-spacing: 2px; color: #333; }
.gauge-unit { height: 20px; margin-top: 20px; font-size: 16.500px; line-height: 20px; color: #6c757d; }
.stat-note { margin-top: 1px; height: 22px; line-height: 22px; font-size: 15.800px; color: #6c757d; white-space: nowrap; }
.alert-body { height: 180px; margin-top: 8px; display: flex; flex-direction: column; align-items: center; }
.alert-check { width: 58px; height: 58px; margin-top: 37px; }
.alert-state { margin-top: 14px; font-size: 22px; line-height: 32px; font-weight: 700; color: #212529; }

.panels { margin-top: 47px; display: flex; gap: 29px; align-items: flex-start; }
.panel { background: #fff; border-radius: 12px 12px 0 0; }
.panel-map { width: 1218px; flex: none; }
.panel-chart { width: 594px; flex: none; }
.panel-head { height: 57px; background: #0d6efd; border-radius: 12px 12px 0 0; display: flex; align-items: center; justify-content: space-between; padding: 0 22px 0 19px; color: #fff; }
.panel-title { display: flex; align-items: center; font-size: 22.300px; font-weight: 500; white-space: nowrap; }
.title-map { letter-spacing: .35px; }
.panel-ic { width: 28px; height: 28px; margin-right: 9px; color: #fff; }
.panel-chart .panel-ic { margin-right: 7px; }
.btn-group { display: flex; gap: 2px; }
.seg { height: 37px; padding: 0; background: #fff; border: 0; color: #212529; font-size: 15.500px; border-radius: 0; }
.seg:nth-child(1) { width: 98px; background: #c2c3c4; border-radius: 6px 0 0 6px; }
.seg:nth-child(2) { width: 79px; }
.seg:nth-child(3) { width: 96px; }
.seg:nth-child(4) { width: 89px; border-radius: 0 6px 6px 0; }
.range { width: 106px; height: 37px; background: #f8f9fa; border: 0; border-radius: 6px; font-size: 15.500px; color: #212529; display: flex; align-items: center; justify-content: center; }

.map-tools { height: 66px; background: #f8f9fa; border-bottom: 2px solid #dee2e6; display: flex; align-items: center; padding: 0 22px 0 19px; gap: 28px; }
.select { height: 44px; border: 1px solid #dee2e6; border-radius: 7px; background: #fff; display: flex; align-items: center; font-size: 18px; }
.sel-a { width: 274px; }
.sel-b { width: 272px; }
.sel-ic { height: 100%; background: #f8f9fa; border-right: 1px solid #dee2e6; border-radius: 7px 0 0 7px; display: flex; align-items: center; justify-content: center; flex: none; }
.sel-a .sel-ic { width: 54px; }
.sel-b .sel-ic { width: 44px; }
.sel-svg { width: 24px; height: 24px; }
.sel-pin { width: 16px; height: 22px; color: #212529; }
.sel-text { margin-left: 14px; white-space: nowrap; color: #343a40; }
.chev { width: 16px; height: 16px; margin-left: auto; margin-right: 16px; }
.map-actions { margin-left: auto; display: flex; gap: 11px; }
.act { height: 37px; background: transparent; border-radius: 5px; font-size: 15.500px; display: flex; align-items: center; justify-content: center; white-space: nowrap; padding: 0; }
.act-blue { width: 128px; border: 1.500px solid #0d6efd; color: #0d6efd; }
.act-gray { width: 157px; border: 1.500px solid #9aa1a8; color: #8a9299; }
.act-ic { width: 17px; height: 17px; margin-right: 9px; }

.map { height: 214px; position: relative; overflow: hidden; background: #aad3df; }
.map-svg { display: block; width: 1218px; height: 214px; font-family: "Noto Sans", "DejaVu Sans", "Noto Sans CJK SC", sans-serif; }
.map-base { filter: blur(.45px); }
.m-green { fill: #c9deb2; filter: blur(5px); }
.m-prov { fill: none; stroke: #cfbccf; stroke-width: 1.900; }
.m-country { fill: none; stroke: #b7a3bb; stroke-width: 3.200; }
.m-sea { fill: none; stroke: #a59bc0; stroke-width: 3.600; }
.m-isl { fill: none; stroke: #a9aac6; stroke-width: 2.400; }
.seam { stroke: #e3f2f5; stroke-width: 1; fill: none; }
.seam-faint { stroke: #fff; stroke-opacity: .4; stroke-width: 1; fill: none; }
.ml { font-size: 12px; fill: #5c5c5c; paint-order: stroke; stroke: rgba(255,255,255,.65); stroke-width: 2px; }
.ml-cjk { font-size: 12px; fill: #9a7a9a; }
.ml-city { font-size: 12.500px; fill: #555; }
.ml-lao, .ml-thai2 { font-size: 12.500px; fill: #8d6b94; }
.ml-lao2 { font-size: 11.500px; fill: #555; }
.ml-thai { font-size: 10px; fill: #555; }
.ml-khm { font-size: 11px; fill: #8d6b94; }
.ml-country { font-size: 13.500px; fill: #8d5f94; letter-spacing: .4px; }
.ml-phil { font-size: 13.500px; fill: #8d5f94; letter-spacing: .4px; }
.ml-luzon { font-size: 11.500px; font-style: italic; fill: #333; }
.ml-manila { font-size: 13px; fill: #555; }
.ml-dot { fill: #fff; stroke: #777; stroke-width: .8; }
.ml-cap { fill: #fff; stroke: #666; stroke-width: 1.600; }
.zoom-ctl { position: absolute; left: 13px; top: 13px; width: 38px; height: 74px; background: #fff; border-radius: 4px; box-shadow: 0 0 0 1.500px rgba(0,0,0,.18); display: flex; flex-direction: column; font-family: "Liberation Sans", sans-serif; }
.zoom-btn { height: 36px; display: flex; align-items: center; justify-content: center; font-size: 30px; font-weight: 700; color: #111; }
.zoom-minus { height: 38px; border-top: 1px solid #ccc; }
.map-alert { position: absolute; right: 12px; top: 12px; width: 205px; height: 69px; background: #fff3cd; border: 1px solid #ffe69c; border-radius: 6px; padding: 13px 13px; color: #664d03; font-family: "Liberation Sans", sans-serif; font-size: 14.300px; }
.map-alert-h { display: flex; align-items: center; font-weight: 700; font-size: 14px; line-height: 16px; }
.map-alert-ic { width: 14px; height: 13px; margin-right: 4px; }
.map-alert-b { margin-top: 5px; line-height: 16px; white-space: nowrap; }

.chart-body { padding: 19px 18px 0 19px; height: 300px; }
.tabs { height: 49px; display: flex; border-bottom: 2px solid #dee2e6; font-size: 17.800px; color: #0d6efd; }
.ctab { display: flex; align-items: center; padding: 0 21px 0 19px; height: 49px; white-space: nowrap; }
.ctab.is-on { width: 147px; justify-content: center; padding: 0; color: #212529; background: #fff; border: 2px solid #dee2e6; border-bottom: 2px solid #fff; border-radius: 7px 7px 0 0; }
.chart { display: block; width: 557px; height: 300px; font-family: "Liberation Sans", sans-serif; }
.c-legend { font-size: 14.500px; fill: #666; }
.c-grid { stroke: #e6e6e6; stroke-width: 1; fill: none; }
.c-tick { font-size: 14.500px; fill: #666; text-anchor: end; }
.c-title { font-size: 15px; font-weight: 700; fill: #666; text-anchor: end; }

/* taskbar */
.taskbar { height: 41px; flex: none; background: linear-gradient(90deg, #1a2c34, #1f2f38 60%, #1c2226); display: flex; color: #fff; }
.tb-start { width: 56px; background: #111; display: flex; align-items: center; justify-content: center; }
.tb-win { width: 24px; height: 24px; }
.tb-search { width: 385px; background: #f0f0f0; border-top: 3px solid #c8c8c8; display: flex; align-items: center; padding-left: 16px; color: #333; overflow: hidden; }
.tb-search-ic { width: 26px; height: 26px; flex: none; }
.tb-search-text { margin-left: 16px; font-size: 21px; }
.tb-deco { width: 76px; height: 38px; margin-left: auto; margin-right: 5px; align-self: flex-end; }
.tb-apps { display: flex; align-items: center; margin-left: 3.500px; }
.tb-slot { width: 57px; height: 41px; display: flex; align-items: center; justify-content: center; flex: none; }
.tb-ic { width: 24px; height: 24px; }
.tb-w { font-family: "Liberation Sans", sans-serif; font-size: 11px; font-weight: 700; fill: #fff; text-anchor: middle; }
.tb-hl { background: #3d4e57; width: 50px; margin-left: 3px; margin-right: 4px; }
.tb-hl2 { background: #2e3c44; }
.tray { margin-left: auto; display: flex; align-items: center; }
.weather { display: flex; align-items: center; font-size: 20px; color: #eee; }
.weather-ic { width: 36px; height: 36px; margin-right: 13px; }
.weather-n { font-size: 12px; fill: #fff; text-anchor: middle; font-family: "Liberation Sans", sans-serif; }
.tray-temp { margin-right: 12px; }
.tray-ic { height: 24px; flex: none; }
.tray-chev { width: 18px; height: 12px; margin-left: 29px; }
.tray-meet { width: 18px; height: 26px; margin-left: 18px; }
.tray-cloud { width: 24px; height: 16px; margin-left: 14px; }
.tray-batt { width: 24px; height: 20px; margin-left: 12px; }
.tray-wifi { width: 20px; height: 20px; margin-left: 17px; }
.tray-vol { width: 22px; height: 22px; margin-left: 12px; }
.tray-pen { width: 22px; height: 22px; margin-left: 21px; }
.tray-time { margin-left: 20px; font-size: 17.500px; color: #eee; white-space: nowrap; }
.tray-note { width: 24px; height: 30px; margin-left: 29px; margin-right: 38px; }

/* side window */
.side-col { width: 76px; display: flex; flex-direction: column; border-left: 1px solid #444; }
.side-win { height: 1049px; display: flex; flex-direction: column; background: #f7f7f7; overflow: hidden; }
.side-tabs { height: 34px; flex: none; background: #e3e3e3; display: flex; align-items: center; padding-left: 10px; }
.side-prof { width: 24px; height: 24px; }
.side-ws { width: 24px; height: 20px; margin-left: 16px; flex: none; }
.side-tool { height: 39px; flex: none; display: flex; align-items: center; padding-left: 19px; }
.side-back { width: 17px; height: 17px; flex: none; }
.side-reload { width: 18px; height: 18px; margin-left: 24px; flex: none; }
.side-panel { height: 973px; width: 100%; margin-left: 2px; background: #e9eaec; border-radius: 10px 0 0 10px; display: flex; box-shadow: 0 1px 2px rgba(0,0,0,.2); }
.rail { width: 54px; flex: none; display: flex; flex-direction: column; align-items: center; }
.rail-ic { width: 21px; height: 21px; flex: none; margin-bottom: 18px; }
.rail-home { margin-top: 19px; margin-bottom: 11px; }
.rail-folder { width: 35px; height: 35px; background: #f5f5f5; border: 1px solid #ddd; border-radius: 5px; display: flex; align-items: center; justify-content: center; }
.rail-folder .rail-ic { margin: 0; }
.rail-grow { height: 309px; flex: none; }
.rail-dot { width: 2px; height: 2px; background: #555; border-radius: 50%; align-self: flex-start; margin: 9px 0 -11px 12px; flex: none; }
.rail-div { width: 27px; height: 2px; background: #cfcfcf; margin: -3px 0 14px; }
.rail-help { margin-top: 295px; font-size: 20px; color: #444; line-height: 1; }
.files { flex: 1; margin-top: 54px; background: #f9f9f9; border-radius: 6px 0 0 6px; padding-left: 10px; overflow: hidden; display: flex; flex-direction: column; }
.fl-h { height: 20px; margin-top: 8px; font-size: 15px; line-height: 20px; color: #333; flex: none; width: 16px; white-space: nowrap; }
.fl-sp { height: 66px; flex: none; }
.fl-h2 { margin-top: 10px; }
.fl-h3 { margin-top: 19px; }
.fl { width: 20px; height: 18px; margin-bottom: 8.400px; flex: none; }
.fl-dir { border: 1.500px solid #666; border-radius: 2px; background: #fff; height: 15px; margin-top: 3px; }
.fl-lines { height: 12px; margin-top: 3px; margin-bottom: 11.400px; border-top: 2px solid #888; border-bottom: 2px solid #888; }
.fl-m { height: 10px; margin-top: 4px; margin-bottom: 12.400px; border: 1.500px solid #aaa; background: #eee; }
.fl-black { width: 8px; height: 14px; background: #111; margin-top: 12px; flex: none; }
.fl-input { height: 30px; margin-top: 14px; margin-left: -6px; background: #fff; border: 1px solid #ccc; border-radius: 5px; flex: none; }
.side-taskbar { height: 26px; flex: none; background: #111; display: flex; align-items: center; padding-left: 10px; }
.st-win { width: 17px; height: 17px; flex: none; }
.st-search { width: 17px; height: 17px; margin-left: 20px; flex: none; }
```
